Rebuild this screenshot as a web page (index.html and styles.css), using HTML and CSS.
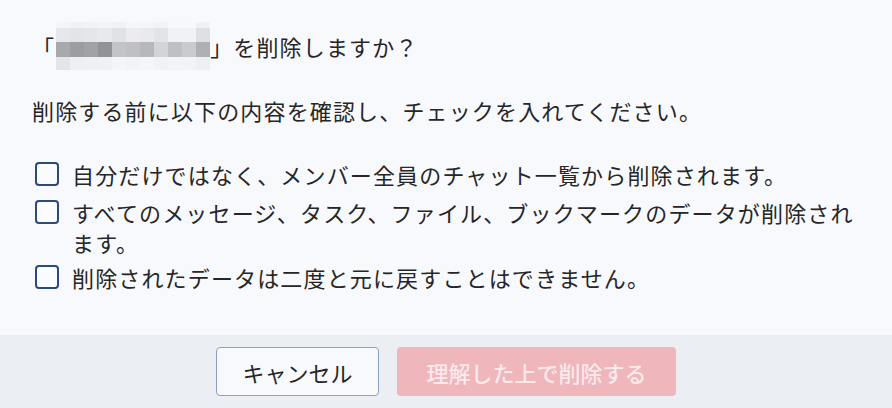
FILE: index.html
```html
<!DOCTYPE html>
<html lang="ja">
<head>
  <meta charset="UTF-8">
  <meta name="viewport" content="width=device-width, initial-scale=1.0">
  <title>チャットの削除</title>
  <link rel="stylesheet" href="styles.css">
</head>
<body>
  <div class="dialog">
    <div class="dialog-body">
      <h2 class="dialog-title">
        <span>「</span>
        <span class="masked" aria-label="非表示">
          <i style="background:#f4f5f9"></i><i style="background:#f1f2f6"></i><i style="background:#f2f3f7"></i><i style="background:#f3f4f8"></i><i style="background:#f1f2f6"></i><i style="background:#f5f6fa"></i><i style="background:#f4f5f9"></i><i style="background:#f2f3f7"></i><i style="background:#f7f8fc"></i><i style="background:#f7f8fc"></i><i style="background:#f0f1f5"></i>
          <i style="background:#e6e7eb"></i><i style="background:#e3e4e8"></i><i style="background:#e5e6ea"></i><i style="background:#e8e9ed"></i><i style="background:#e1e2e6"></i><i style="background:#ececf0"></i><i style="background:#e9eaee"></i><i style="background:#e3e4e8"></i><i style="background:#f1f2f6"></i><i style="background:#f1f2f6"></i><i style="background:#dfe0e4"></i>
          <i style="background:#a8a9ad"></i><i style="background:#9c9da1"></i><i style="background:#a1a2a6"></i><i style="background:#929397"></i><i style="background:#c3c4c8"></i><i style="background:#bfc0c4"></i><i style="background:#b7b8bc"></i><i style="background:#d3d4d8"></i><i style="background:#bfc0c4"></i><i style="background:#cacbcf"></i><i style="background:#afb0b4"></i>
          <i style="background:#e4e5e9"></i><i style="background:#eeeff3"></i><i style="background:#eff0f4"></i><i style="background:#f0f1f5"></i><i style="background:#f4f5f9"></i><i style="background:#f2f3f7"></i><i style="background:#f5f6fa"></i><i style="background:#f1f2f6"></i><i style="background:#f3f4f8"></i><i style="background:#f2f3f7"></i><i style="background:#eeeff3"></i>
        </span>
        <span>」を削除しますか？</span>
      </h2>
      <p class="dialog-text">削除する前に以下の内容を確認し、チェックを入れてください。</p>
      <ul class="confirm-list">
        <li>
          <input type="checkbox" id="check1">
          <label for="check1">自分だけではなく、メンバー全員のチャット一覧から削除されます。</label>
        </li>
        <li>
          <input type="checkbox" id="check2">
          <label for="check2">すべてのメッセージ、タスク、ファイル、ブックマークのデータが削除されます。</label>
        </li>
        <li>
          <input type="checkbox" id="check3">
          <label for="check3">削除されたデータは二度と元に戻すことはできません。</label>
        </li>
      </ul>
    </div>
    <div class="dialog-footer">
      <button type="button" class="btn btn-cancel">キャンセル</button>
      <button type="button" class="btn btn-danger" id="deleteBtn" disabled>理解した上で削除する</button>
    </div>
  </div>
  <script>
    const checks = document.querySelectorAll('.confirm-list input');
    const deleteBtn = document.getElementById('deleteBtn');
    checks.forEach((c) => {
      c.addEventListener('change', () => {
        deleteBtn.disabled = ![...checks].every((x) => x.checked);
      });
    });
  </script>
</body>
</html>
```

FILE: styles.css
```css
html, body {
  margin: 0;
  padding: 0;
  height: 100%;
}
body {
  font-family: "Noto Sans CJK JP", "Noto Sans", sans-serif;
  background: #f8f9fd;
  color: #262626;
}
.dialog {
  display: flex;
  flex-direction: column;
  height: 100%;
}
.dialog-body {
  flex: 1;
  padding: 22px 26px 0 32px;
  font-size: 22px;
  letter-spacing: 1.15px;
}
.dialog-title {
  display: flex;
  align-items: center;
  margin: 0;
  font-size: 22px;
  font-weight: 400;
  line-height: 27px;
}
.masked {
  display: grid;
  grid-template-columns: repeat(11, 14px);
  grid-template-rows: 6px 14px 15px 13px;
  margin-left: 1px;
}
.masked i {
  display: block;
}
.dialog-text {
  margin: 27px 0 0;
  line-height: 27px;
}
.confirm-list {
  list-style: none;
  margin: 35px 0 0;
  padding: 0;
  display: flex;
  flex-direction: column;
  gap: 8px;
}
.confirm-list li {
  display: flex;
  align-items: flex-start;
  line-height: 30px;
}
.confirm-list li:last-child {
  margin-top: -3px;
}
.confirm-list input {
  appearance: none;
  -webkit-appearance: none;
  flex: none;
  width: 24px;
  height: 24px;
  margin: 3px 13px 0 3px;
  border: 2px solid #2d4a7c;
  border-radius: 4px;
  background: #fbfcff;
  cursor: pointer;
}
.confirm-list input:checked {
  background: #2d4a7c;
}
.dialog-footer {
  display: flex;
  justify-content: center;
  gap: 18px;
  height: 73px;
  padding-top: 12px;
  box-sizing: border-box;
  background: #ebeef3;
}
.btn {
  height: 49px;
  border-radius: 4px;
  font-family: inherit;
  font-size: 22px;
  letter-spacing: 0;
  cursor: pointer;
}
.btn-cancel {
  width: 163px;
  background: #f8f9fd;
  border: 1px solid #8aa1bf;
  color: #262626;
}
.btn-danger {
  width: 279px;
  background: #d6404c;
  border: none;
  color: #fff;
  font-weight: 500;
}
.btn-danger:disabled {
  background: #efb6bb;
  color: #fbe9ec;
  cursor: default;
}
```
